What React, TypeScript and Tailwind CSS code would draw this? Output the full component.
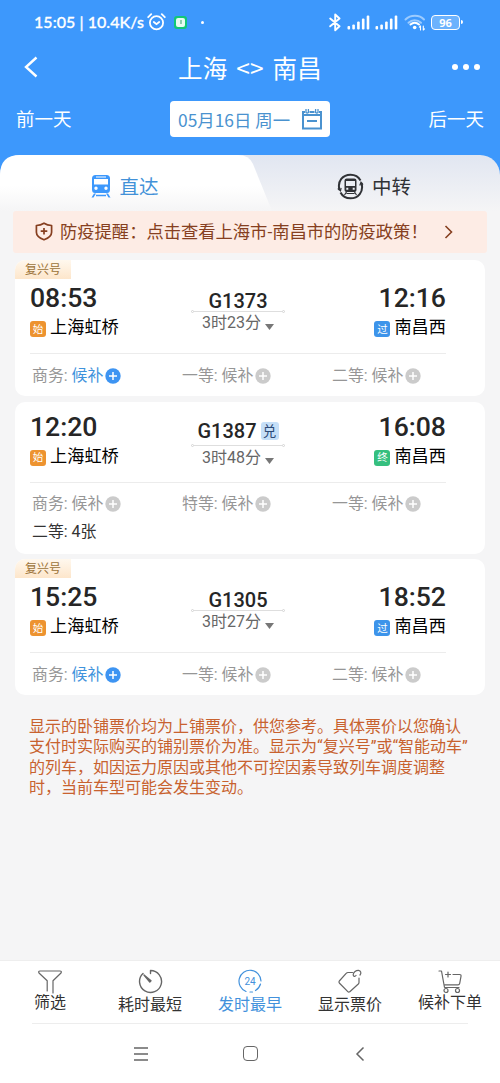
import React from "react";

type Seat = {
    name: string;
    value: string;
    active?: boolean;
    available?: boolean;
};

type Train = {
    number: string;
    start: string;
    end: string;
    duration: string;
    fuxing?: boolean;
    exchange?: boolean;
    endTag: string;
    seats: Seat[];
};

const trains: Train[] = [
    {
        number: "G1373",
        start: "08:53",
        end: "12:16",
        duration: "3时23分",
        fuxing: true,
        endTag: "过",
        seats: [
            { name: "商务", value: "候补", active: true },
            { name: "一等", value: "候补" },
            { name: "二等", value: "候补" },
        ],
    },
    {
        number: "G1387",
        start: "12:20",
        end: "16:08",
        duration: "3时48分",
        exchange: true,
        endTag: "终",
        seats: [
            { name: "商务", value: "候补" },
            { name: "特等", value: "候补" },
            { name: "一等", value: "候补" },
            { name: "二等", value: "4张", available: true },
        ],
    },
    {
        number: "G1305",
        start: "15:25",
        end: "18:52",
        duration: "3时27分",
        fuxing: true,
        endTag: "过",
        seats: [
            { name: "商务", value: "候补", active: true },
            { name: "一等", value: "候补" },
            { name: "二等", value: "候补" },
        ],
    },
];

const Signal = () => (
    <svg width="23" height="15" viewBox="0 0 23 15" fill="#fff">
        <rect x="0.5" y="11" width="2.6" height="3.5" rx="1" />
        <rect x="5.3" y="9.5" width="2.6" height="5" rx="1" />
        <rect x="10.1" y="6.5" width="2.6" height="8" rx="1" />
        <rect x="14.9" y="3.5" width="2.6" height="11" rx="1" />
        <rect x="19.7" y="0.5" width="2.6" height="14" rx="1" />
    </svg>
);

const StatusBar = () => (
    <div className="flex h-11 items-center pl-[34px] pr-[37px] text-white">
        <span className="w-[110px] whitespace-nowrap font-['Lato','Noto_Sans_CJK_SC',sans-serif] text-[16px] font-medium tracking-[0.05px] [-webkit-text-stroke:0.3px_white]">
            15:05 | 10.4K/s
        </span>
        <svg className="ml-[3px]" width="19" height="18" viewBox="0 0 19 18" fill="none" stroke="#fff" strokeWidth="1.8" strokeLinecap="round">
            <circle cx="9.5" cy="9.8" r="6.6" />
            <path d="M1.200 4.200 4.200 1.200M17.800 4.200 14.800 1.200M6.800 9l2.700 2.200L12.200 9" />
        </svg>
        <span className="ml-2 flex size-[13px] items-center justify-center rounded-[3px] bg-[#12c777]">
            <span className="flex size-[9px] items-center justify-center rounded-[2px] bg-[#e8fbf1]">
                <span className="h-1 w-[2px] bg-[#8fcdb0]" />
            </span>
        </span>
        <span className="ml-[14px] size-[3px] rounded-full bg-white" />
        <svg className="ml-auto" width="12" height="19" viewBox="0 0 12 19" fill="none" stroke="#fff" strokeWidth="1.900" strokeLinejoin="round" strokeLinecap="round">
            <path d="M1.200 5.500 10.500 13.300 6.200 17.300V1.500l4.300 4L1.200 13.300" />
        </svg>
        <div className="ml-[6px] flex gap-[5px]">
            <Signal />
            <Signal />
        </div>
        <svg className="ml-[6px]" width="22" height="18" viewBox="0 0 22 18" fill="none" strokeWidth="2" strokeLinecap="round">
            <path d="M1.500 6.500c5-5 14-5 18.500 0" stroke="#9ccbfe" />
            <path d="M4.500 9.800c3.500-3.500 9-3.500 12.500 0" stroke="#9ccbfe" />
            <path d="M6.500 11.500c2.500-2.200 6-2.200 8.500 0" stroke="#fff" />
            <circle cx="10.700" cy="14.500" r="1.800" fill="#fff" />
            <path d="M16.500 13v4m-1.200-2.800 1.200-1.200m2.800 0v4m1.200-1.200-1.200 1.200" stroke="#fff" strokeWidth="1.100" />
        </svg>
        <div className="ml-[5px] flex h-[15px] w-[29px] items-center justify-center rounded-[4px] border-[1.500px] border-white bg-[#6cb2fd]">
            <span className="font-['Open_Sans',sans-serif] text-[11px] font-bold leading-none">96</span>
        </div>
        <span className="ml-px h-1 w-[2px] rounded-r bg-white" />
    </div>
);

const Header = () => (
    <header className="h-[155px] shrink-0 bg-[#3d98fc] text-white">
        <StatusBar />
        <div className="flex h-[48px] items-center justify-between pl-[22px] pr-5">
            <svg className="-mt-[3px]" width="18" height="22" viewBox="0 0 18 22" fill="none" stroke="#fff" strokeWidth="2.400">
                <path d="M14.500 1.500 4 11l10.500 9.500" />
            </svg>
            <h1 className="ml-[8px] font-['Noto_Sans_CJK_SC',sans-serif] text-[24.500px] leading-none tracking-[0.200px] [word-spacing:3px]">上海 &lt;&gt; 南昌</h1>
            <div className="-mt-[2px] flex gap-[5px]">
                <span className="size-[6px] rounded-full bg-white" />
                <span className="size-[6px] rounded-full bg-white" />
                <span className="size-[6px] rounded-full bg-white" />
            </div>
        </div>
        <div className="flex h-[54px] items-center justify-between px-4 font-['Noto_Sans_CJK_SC',sans-serif] text-[18.500px]">
            <span>前一天</span>
            <div className="flex h-9 w-40 items-center justify-between rounded-[4px] bg-white pl-2 pr-[7px] text-[#4a92cf]">
                <span className="pt-[2px] text-[17.400px]">05月16日 周一</span>
                <svg width="22" height="22" viewBox="0 0 22 22" fill="none" stroke="#4a92cf" strokeWidth="2">
                    <path d="M4 4H2v16.500h18V4h-2M8.500 4h5M2 7h18" />
                    <path d="M5 1v3.500q1.200 1 2.400 0V1M14.600 1v3.500q1.200 1 2.400 0V1" strokeWidth="1.300" />
                    <path d="M6 13h10" />
                </svg>
            </div>
            <span>后一天</span>
        </div>
    </header>
);

const Tabs = () => (
    <div className="h-[56px] bg-[#3d98fc]">
        <div className="flex h-full rounded-t-[20px] bg-linear-to-b from-[#e1e6f1] to-[#f5f5f6]">
            <div className="flex h-full w-[272px] items-center justify-center bg-linear-to-b from-white from-55% to-[#f5f5f6] pr-[22px] pt-[7px] text-[#4291d8] [clip-path:path('M0_20Q0_0_20_0H238Q249_0_253_9L272_56H0Z')]">
                <svg width="20" height="23" viewBox="0 0 20 23" fill="#3d98fc">
                    <path fillRule="evenodd" d="M4.500 0h11Q19 0 19 3.500v11Q19 18 16 18H4Q1 18 1 14.500v-11Q1 0 4.500 0ZM3 4v5.500h14V4ZM5 11.500a1.700 1.700 0 1 0 0 3.400 1.700 1.700 0 0 0 0-3.400Zm10 0a1.700 1.700 0 1 0 0 3.400 1.700 1.700 0 0 0 0-3.400ZM5 1.500v1h10v-1Z" />
                    <path d="m3 18.500-2.500 4h2L5 18.500ZM17 18.500l2.500 4h-2L15 18.500ZM5 19.800h10v1.500H5Z" />
                </svg>
                <span className="ml-[8px] pt-[2px] text-[19.500px]">直达</span>
            </div>
            <div className="flex h-full items-center pl-[65px] pt-[7px] text-[#303236]">
                <svg width="27" height="27" viewBox="0 0 27 27" fill="none" stroke="#303236" strokeWidth="2">
                    <path d="M2.500 17C0 8 6 1.700 13.500 1.700c4.500 0 8 2 10 5.800M24.500 10c2.500 9-3.500 15.300-11 15.300-4.500 0-8-2-10-5.800" />
                    <path d="m.8 15.500 2.700 2.300.6-3M22.800 12.500l1.200-3.300 2 2.500" strokeWidth="1.200" />
                    <path fill="#303236" stroke="none" fillRule="evenodd" d="M9.700 5.500h7.600q2.200 0 2.200 2v9.500q0 2-2 2h-8q-2 0-2-2V7.500q0-2 2.200-2ZM9 8v5h9V8Zm.3 6.800v2h2v-2Zm6.400 0v2h2v-2Z" />
                    <path d="m9.500 19-2 3m10-3 2 3M9.500 20.500h8" strokeWidth="1.200" />
                </svg>
                <span className="ml-[8px] pt-[2px] text-[19.500px]">中转</span>
            </div>
        </div>
    </div>
);

const Notice = () => (
    <div className="mx-[13px] flex h-[42px] items-center rounded-[3px] bg-[#fdece5] pl-[22px] pr-[34px] text-[#863f20]">
        <svg className="-mt-[2px] shrink-0" width="18" height="19" viewBox="0 0 18 19" fill="none" stroke="#863f20" strokeWidth="1.700" strokeLinejoin="round">
            <path d="M9 1.200c2.500 1.700 5 2.300 7.600 2.300v6.800c0 3.500-3.500 6-7.600 7.500-4.100-1.500-7.600-4-7.600-7.500V3.500C4 3.500 6.500 2.900 9 1.200Z" />
            <path d="M9 6v6.500M5.700 9.200h6.600" />
        </svg>
        <span className="ml-[7px] whitespace-nowrap pt-px text-[17.300px]">防疫提醒：点击查看上海市-南昌市的防疫政策！</span>
        <svg className="ml-auto shrink-0" width="9" height="14" viewBox="0 0 9 14" fill="none" stroke="#863f20" strokeWidth="1.600">
            <path d="m1.500 1 6 6-6 6" />
        </svg>
    </div>
);

const StationTag = ({ text }: { text: string }) => {
    const colors: Record<string, string> = {
        始: "bg-[#ed9330]",
        过: "bg-[#3d94ea]",
        终: "bg-[#35bf7f]",
    };
    return (
        <span className={`mt-[2px] flex size-4 items-center justify-center rounded-[3px] pt-[2px] text-[10.500px] leading-none text-white ${colors[text]}`}>
            {text}
        </span>
    );
};

const SeatItem = ({ seat }: { seat: Seat }) => (
    <div className={`flex h-7 w-[150px] items-center text-[15.900px] ${seat.available ? "text-[#333]" : "text-[#969696]"}`}>
        <span className="whitespace-pre">{seat.name}: </span>
        <span className={seat.active ? "text-[#3f93dc]" : ""}>{seat.value}</span>
        {!seat.available && (
            <svg className="ml-[2px]" width="16" height="16" viewBox="0 0 16 16">
                <circle cx="8" cy="8" r="7.700" fill={seat.active ? "#3d94f2" : "#cbcbcb"} />
                <path d="M8 4v8M4 8h8" stroke="#fff" strokeWidth="1.500" />
            </svg>
        )}
    </div>
);

const TrainCard = ({ train }: { train: Train }) => (
    <div className="overflow-hidden rounded-[10px] bg-white">
        {train.fuxing && (
            <div className="flex h-[19px] w-14 items-center justify-center bg-linear-to-b from-[#fff8ee] to-[#fde6cb] pt-px text-[12px] leading-none text-[#9b7339]">
                复兴号
            </div>
        )}
        <div className={`ml-[15px] mr-[39px] flex justify-between border-b border-[#ececec] ${train.fuxing ? "h-[75px] pt-[5px]" : "h-[81px] pt-[11px]"}`}>
            <div className="w-[110px]">
                <div className="text-[26.600px] font-medium leading-[28px] text-[#262626]">{train.start}</div>
                <div className="mt-[2px] flex h-[28px] items-center gap-1 text-[17.200px] text-black">
                    <StationTag text="始" />
                    上海虹桥
                </div>
            </div>
            <div className={`flex w-[94px] flex-col items-center ${train.fuxing ? "pt-[7px]" : "pt-[8px]"}`}>
                <div className="flex items-center gap-1 text-[20px] font-medium leading-[21px] text-[#262626]">
                    {train.number}
                    {train.exchange && (
                        <span className="flex size-[18px] items-center justify-center rounded-[3px] bg-[#c5dff8] pt-px text-[13.500px] font-normal leading-none text-[#2d4a76]">
                            兑
                        </span>
                    )}
                </div>
                <div className={`flex w-full items-center ${train.fuxing ? "-mt-px h-[1px]" : "mt-[2px] h-[3px]"}`}>
                    <span className="size-[3px] shrink-0 rounded-full border border-[#d4d4d4]" />
                    <span className="h-px grow bg-[#dedede]" />
                    <span className="size-[3px] shrink-0 rounded-full border border-[#d4d4d4]" />
                </div>
                <div className="mt-px flex h-[20px] items-center gap-[4px] text-[16px] leading-[20px] text-[#666]">
                    {train.duration}
                    <svg className="mt-[7px]" width="9" height="6" viewBox="0 0 9 6" fill="#777">
                        <path d="M0 0h9L4.500 6Z" />
                    </svg>
                </div>
            </div>
            <div className="flex w-[110px] flex-col items-end">
                <div className="text-[26.600px] font-medium leading-[28px] text-[#262626]">{train.end}</div>
                <div className="mt-[2px] flex h-[28px] items-center gap-1 text-[17.200px] text-black">
                    <StationTag text={train.endTag} />
                    南昌西
                </div>
            </div>
        </div>
        <div className={`flex flex-wrap content-start pl-[17px] ${train.fuxing ? "h-[42px] pt-[8px]" : "h-[71px] pt-[7px]"}`}>
            {train.seats.map((seat) => (
                <SeatItem key={seat.name} seat={seat} />
            ))}
        </div>
    </div>
);

const iconProps = {
    width: 26,
    height: 26,
    viewBox: "0 0 26 26",
    fill: "none",
    stroke: "#666",
    strokeWidth: 1.2,
    strokeLinejoin: "round" as const,
    strokeLinecap: "round" as const,
};

const actions = [
    {
        label: "筛选",
        raised: true,
        icon: (
            <svg {...iconProps}>
                <path d="M10.200 23V12.800L2 5Q1 3 3 3h20q2 0 1 2L16 12.800V25" />
            </svg>
        ),
    },
    {
        label: "耗时最短",
        icon: (
            <svg {...iconProps} strokeWidth={1.4}>
                <path d="M13.500 5.500V2.500a11 11 0 1 1-7.500 3" />
                <path d="M7 7 14 12.800 12.800 14Z" fill="#555" />
            </svg>
        ),
    },
    {
        label: "发时最早",
        active: true,
        icon: (
            <svg {...iconProps} stroke="#4291dc">
                <path d="M9 23.500A11 11 0 1 1 24 13M23.500 16a11 11 0 0 1-5 6.500M15.500 24h-2.500" />
                <text x="13" y="17" fill="#4291dc" stroke="none" fontSize="10" textAnchor="middle">
                    24
                </text>
            </svg>
        ),
    },
    {
        label: "显示票价",
        icon: (
            <svg {...iconProps}>
                <path d="M15.500 4.500H11q-1 0-1.600.7L2.300 13q-.8 1 0 2l8.500 8.700q1 1 2 0l8.500-7.700q.7-.7.7-1.500V10" />
                <path d="M19 7.500c-1 1.500-3 1-2.800-1C16.500 4 19 2.200 21.500 2.300c2.500.2 3 3 1.500 4.700" />
            </svg>
        ),
    },
    {
        label: "候补下单",
        raised: true,
        icon: (
            <svg {...iconProps}>
                <path d="M2 3h2.500L7.500 19.500H22M16 6.500h6.500q1.800 0 1.500 1.800l-1.300 7q-.3 1.500-1.700 1.500H8M8.500 6.500h5M11 4v5" />
                <circle cx="9" cy="22.500" r="2" />
                <circle cx="20.500" cy="22.500" r="2" />
            </svg>
        ),
    },
];

const BottomBar = () => (
    <footer className="h-[123px] shrink-0 border-t border-[#eee] bg-white">
        <div className="mx-auto flex h-[62px] w-[500px]">
            {actions.map((action) => (
                <div
                    key={action.label}
                    className={`flex w-[100px] flex-col items-center pt-[7px] text-[16px] leading-[20px] ${action.active ? "text-[#4291dc]" : "text-[#333]"}`}
                >
                    {action.icon}
                    <span className={action.raised ? "-mt-px" : "mt-px"}>{action.label}</span>
                </div>
            ))}
        </div>
        <div className="mx-8 h-px bg-[#ededed]" />
        <div className="flex h-[59px] items-center justify-center gap-[95px] pl-px">
            <svg width="14" height="14" viewBox="0 0 14 14" stroke="#666" strokeWidth="1.300">
                <path d="M0 1h14M0 7h14M0 13h14" />
            </svg>
            <span className="size-[15px] rounded-[4px] border-[1.500px] border-[#666]" />
            <svg width="14" height="16" viewBox="0 0 14 16" fill="none" stroke="#666" strokeWidth="1.500">
                <path d="M10.500 1.500 4 8l6.500 6.500" />
            </svg>
        </div>
    </footer>
);

const App = () => {
    return (
        <div className="flex h-[1083px] w-[500px] flex-col overflow-hidden bg-[#f5f5f6] font-['Roboto','Noto_Sans_CJK_SC',sans-serif]">
            <Header />
            <main className="grow">
                <Tabs />
                <Notice />
                <div className="mx-[15px] mt-[7px] flex flex-col gap-[5.500px]">
                    {trains.map((train) => (
                        <TrainCard key={train.number} train={train} />
                    ))}
                </div>
                <p className="ml-[29px] mt-[22px] text-[16px] leading-[20.300px] text-[#c8622f]">
                    显示的卧铺票价均为上铺票价，供您参考。具体票价以您确认
                    <br />
                    支付时实际购买的铺别票价为准。显示为“复兴号”或“智能动车”
                    <br />
                    的列车，如因运力原因或其他不可控因素导致列车调度调整
                    <br />
                    时，当前车型可能会发生变动。
                </p>
            </main>
            <BottomBar />
        </div>
    );
};

export default App;
